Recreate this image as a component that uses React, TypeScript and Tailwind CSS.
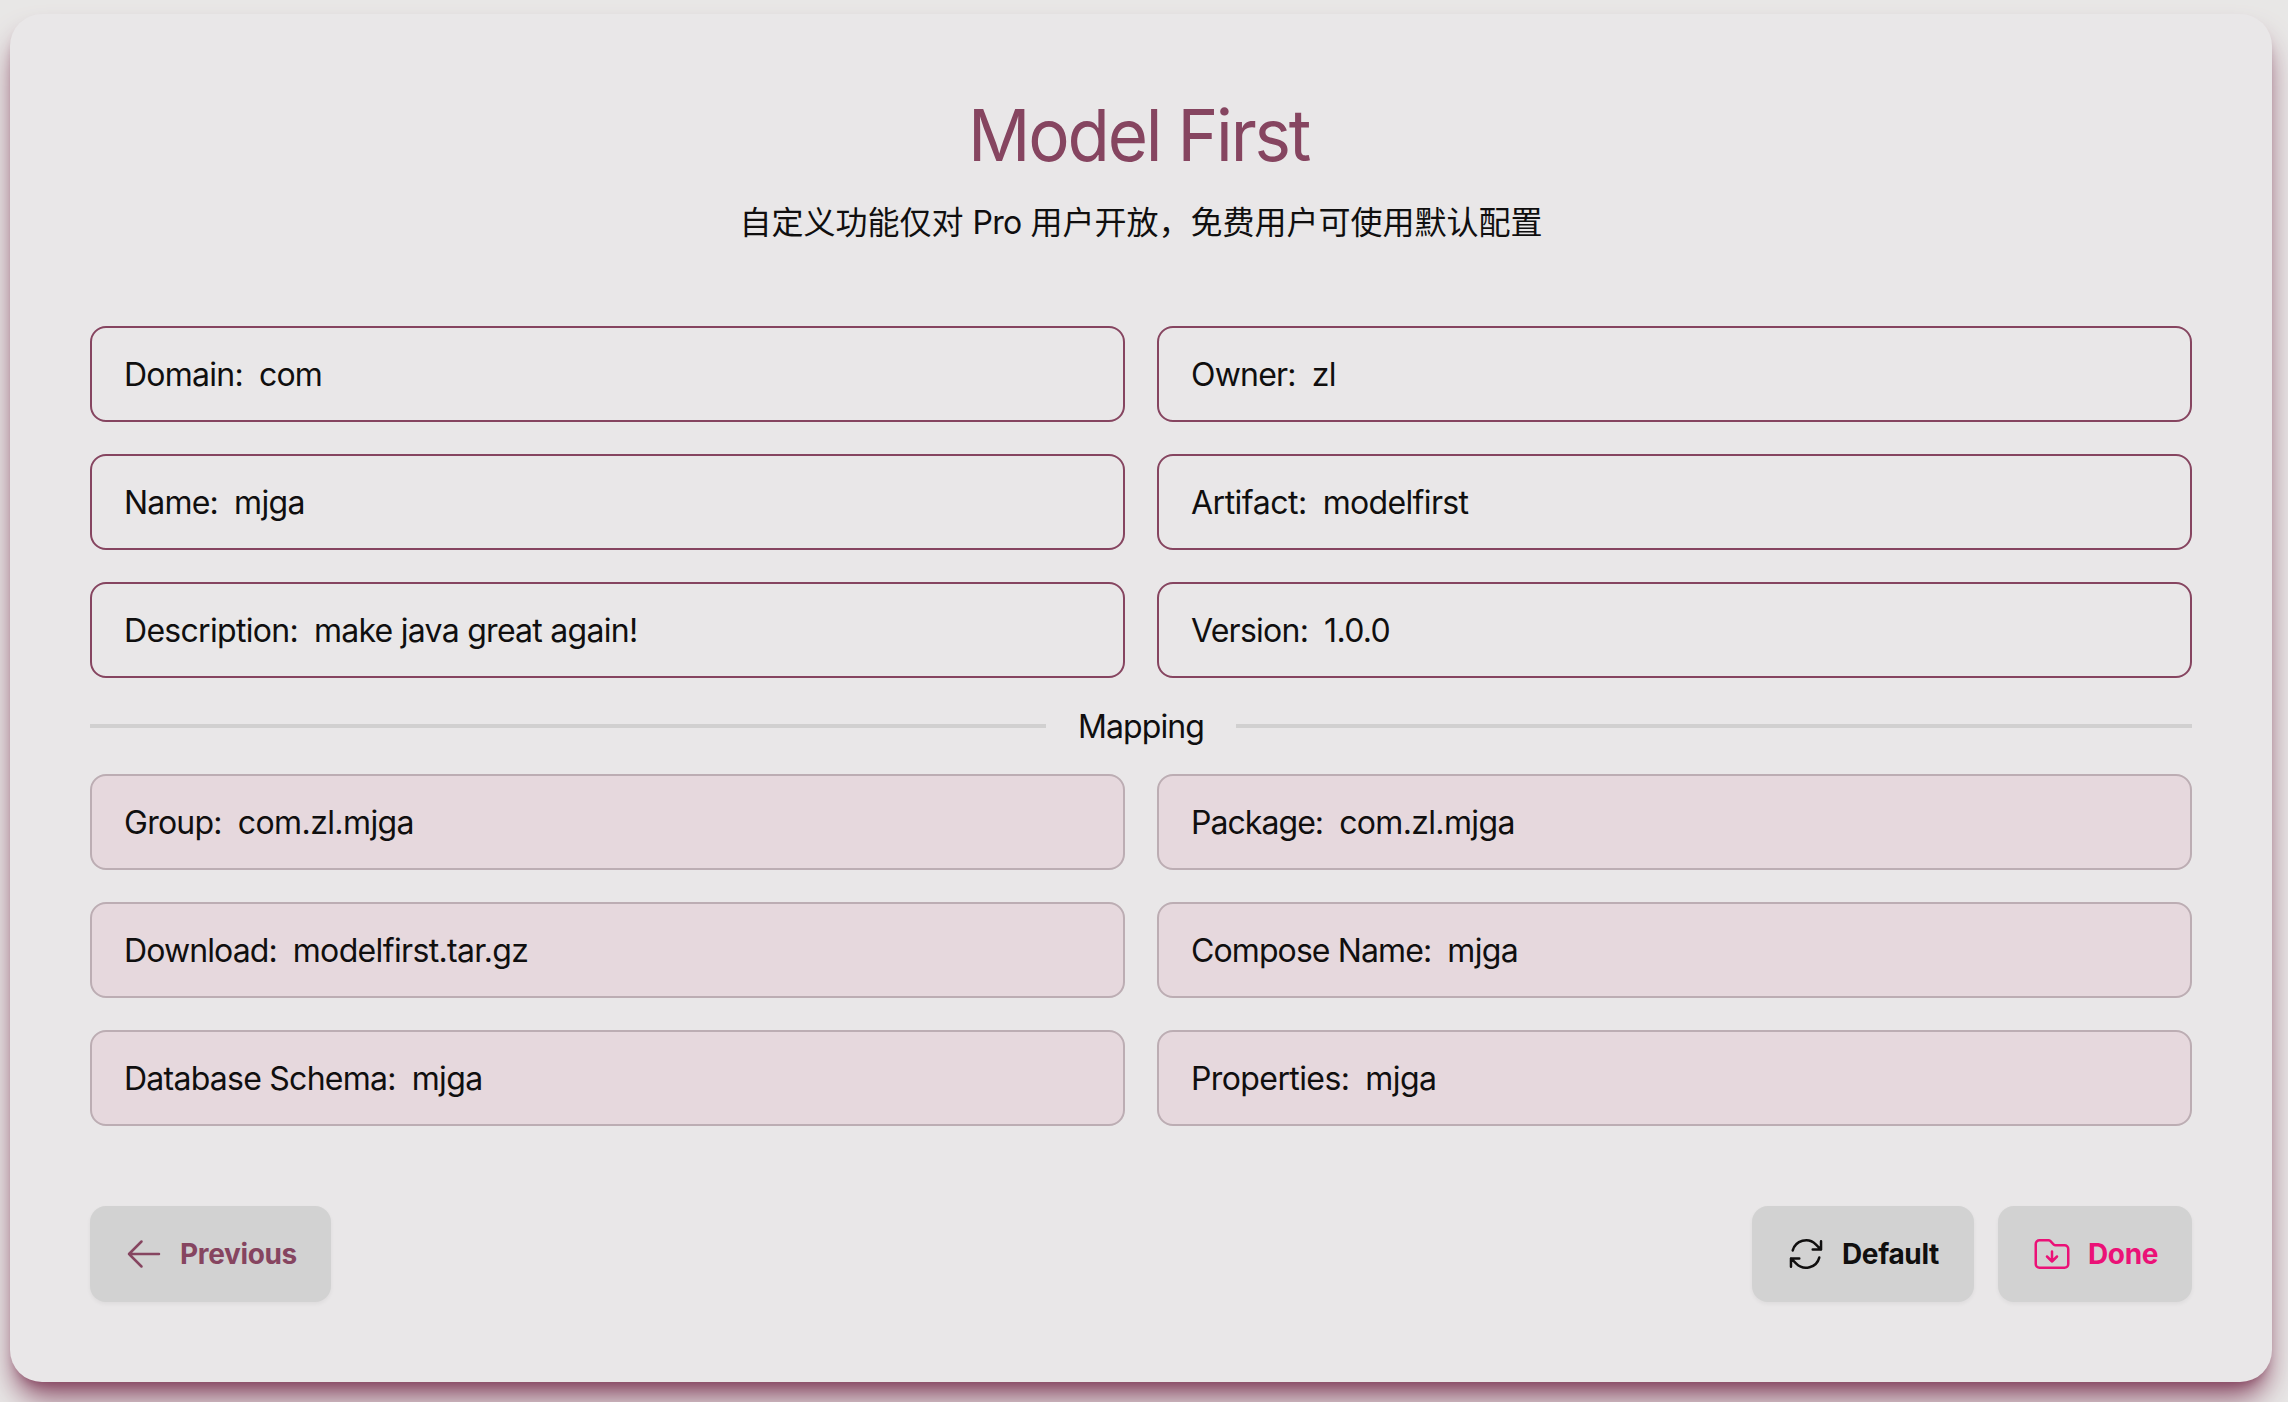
import type { ReactNode } from "react";

type FieldData = { label: string; value: string; labelTracking: string; valueTracking: string };

const settings: FieldData[] = [
  { label: "Domain:", value: "com", labelTracking: "tracking-[-0.75px]", valueTracking: "tracking-[-0.8px]" },
  { label: "Owner:", value: "zl", labelTracking: "tracking-[-0.8px]", valueTracking: "tracking-[-0.6px]" },
  { label: "Name:", value: "mjga", labelTracking: "tracking-[-0.8px]", valueTracking: "tracking-[-0.6px]" },
  { label: "Artifact:", value: "modelfirst", labelTracking: "tracking-[-0.5px]", valueTracking: "tracking-[-0.65px]" },
  { label: "Description:", value: "make java great again!", labelTracking: "tracking-[-0.7px]", valueTracking: "tracking-[-0.73px]" },
  { label: "Version:", value: "1.0.0", labelTracking: "tracking-[-0.75px]", valueTracking: "tracking-[-0.7px]" },
];

const mappings: FieldData[] = [
  { label: "Group:", value: "com.zl.mjga", labelTracking: "tracking-[-0.75px]", valueTracking: "tracking-[-0.6px]" },
  { label: "Package:", value: "com.zl.mjga", labelTracking: "tracking-[-0.95px]", valueTracking: "tracking-[-0.65px]" },
  { label: "Download:", value: "modelfirst.tar.gz", labelTracking: "tracking-[-0.9px]", valueTracking: "tracking-[-0.65px]" },
  { label: "Compose Name:", value: "mjga", labelTracking: "tracking-[-0.9px]", valueTracking: "tracking-[-0.6px]" },
  { label: "Database Schema:", value: "mjga", labelTracking: "tracking-[-0.75px]", valueTracking: "tracking-[-0.6px]" },
  { label: "Properties:", value: "mjga", labelTracking: "tracking-[-0.6px]", valueTracking: "tracking-[-0.6px]" },
];

function Field({ field, className }: { field: FieldData; className: string }) {
  return (
    <div className={`flex h-24 items-center gap-4 rounded-2xl border-2 px-8 pt-0.5 text-[32px] whitespace-nowrap ${className}`}>
      <span className={field.labelTracking}>{field.label}</span>
      <span className={field.valueTracking}>{field.value}</span>
    </div>
  );
}

function Icon({ d }: { d: string }) {
  return (
    <svg viewBox="0 0 24 24" fill="none" stroke="currentColor" strokeWidth="1.5" strokeLinecap="round" strokeLinejoin="round" className="size-10 shrink-0">
      <path d={d} />
    </svg>
  );
}

function Button({ icon, className, children }: { icon: string; className: string; children: ReactNode }) {
  return (
    <button
      className={`flex h-24 items-center gap-4 rounded-2xl bg-[#d2d2d2] pl-[34px] text-[28px] font-[650] tracking-[-0.35px] whitespace-nowrap shadow-[0_2px_4px_rgba(0,0,0,0.05)] ${className}`}
    >
      <Icon d={icon} />
      <span>{children}</span>
    </button>
  );
}

export default function App() {
  return (
    <div className="h-[1402px] overflow-hidden bg-[#e8e7e6] pt-[14px] pr-4 pl-[10px] font-['Inter','Noto_Sans_CJK_SC',sans-serif] text-[#100f0f]">
      <main className="flex h-[1368px] flex-col rounded-[32px] bg-[#e9e7e8] p-20 shadow-[0_20px_30px_-6px_#864560,0_8px_12px_-8px_#864560]">
        <h1 className="h-20 scale-x-96 pt-px pr-[5px] text-center text-[72px] leading-20 tracking-[-2.3px] text-[#864560]">Model First</h1>
        <p className="mt-6 h-12 pt-px text-center text-[32px] leading-[48px]">
          自定义功能仅对 <span className="tracking-[-0.7px]">Pro</span> 用户开放，免费用户可使用默认配置
        </p>
        <section className="mt-20 grid grid-cols-2 gap-8">
          {settings.map((f) => (
            <Field key={f.label} field={f} className="border-[#864560]" />
          ))}
        </section>
        <div className="my-8 flex h-8 items-center gap-8">
          <hr className="h-1 flex-1 border-0 bg-[#d1d0d0]" />
          <span className="pt-0.5 text-[32px] leading-8 tracking-[-0.9px]">Mapping</span>
          <hr className="h-1 flex-1 border-0 bg-[#d1d0d0]" />
        </div>
        <section className="grid grid-cols-2 gap-8">
          {mappings.map((f) => (
            <Field key={f.label} field={f} className="border-[#bcadb3] bg-[#e6d8dd]" />
          ))}
        </section>
        <footer className="mt-20 flex gap-6">
          <Button className="mr-auto w-[241px] text-[#864560]" icon="M10.5 19.5 3 12m0 0 7.5-7.5M3 12h18">
            Previous
          </Button>
          <Button
            className="w-[222px]"
            icon="M16.023 9.348h4.992v-.001M2.985 19.644v-4.992m0 0h4.992m-4.993 0 3.181 3.183a8.25 8.25 0 0 0 13.803-3.7M4.031 9.865a8.25 8.25 0 0 1 13.803-3.7l3.181 3.182m0-4.991v4.99"
          >
            Default
          </Button>
          <Button
            className="w-[194px] text-[#eb1177]"
            icon="m9 13.5 3 3m0 0 3-3m-3 3v-6m1.06-4.19-2.12-2.12a1.5 1.5 0 0 0-1.061-.44H4.5A2.25 2.25 0 0 0 2.25 6v12a2.25 2.25 0 0 0 2.25 2.25h15A2.25 2.25 0 0 0 21.75 18V9a2.25 2.25 0 0 0-2.25-2.25h-5.379a1.5 1.5 0 0 1-1.06-.44Z"
          >
            Done
          </Button>
        </footer>
      </main>
    </div>
  );
}
